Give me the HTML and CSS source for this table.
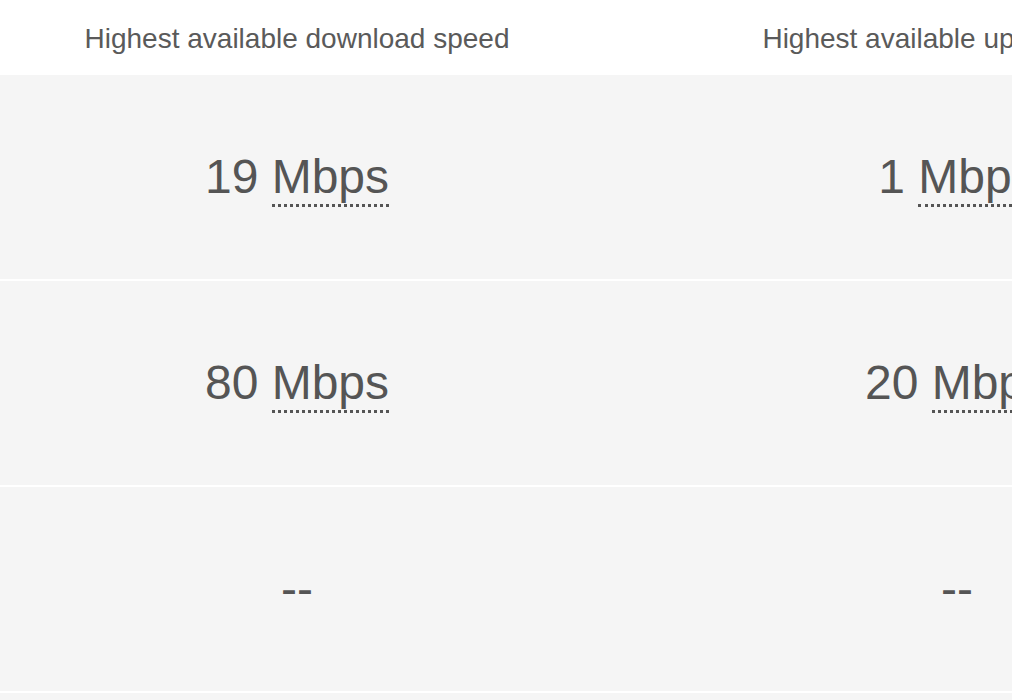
FILE: index.html
```html
<!DOCTYPE html>
<html lang="en">
<head>
<meta charset="utf-8">
<title>Speeds</title>
<link rel="stylesheet" href="styles.css">
</head>
<body>
<div class="table">
  <div class="row head">
    <div class="cell">Highest available download speed</div>
    <div class="cell">Highest available upload speed</div>
  </div>
  <div class="row">
    <div class="cell val">19 <abbr class="unit" title="Megabits per second">Mbps</abbr></div>
    <div class="cell val">1 <abbr class="unit" title="Megabits per second">Mbps</abbr></div>
  </div>
  <div class="row">
    <div class="cell val">80 <abbr class="unit" title="Megabits per second">Mbps</abbr></div>
    <div class="cell val">20 <abbr class="unit" title="Megabits per second">Mbps</abbr></div>
  </div>
  <div class="row">
    <div class="cell val">--</div>
    <div class="cell val">--</div>
  </div>
  <div class="row">
    <div class="cell val"></div>
    <div class="cell val"></div>
  </div>
</div>
</body>
</html>
```
FILE: styles.css
```css
html, body {
  margin: 0;
  padding: 0;
  background: #ffffff;
  overflow: hidden;
  width: 1012px;
  height: 700px;
}
body {
  font-family: "Liberation Sans", Arial, sans-serif;
  color: #555555;
}
.table {
  display: flex;
  flex-direction: column;
  width: 1320px;
}
.row {
  display: grid;
  grid-template-columns: 594px 726px;
  height: 204px;
  background: #f5f5f5;
  border-bottom: 2px solid #ffffff;
}
.row.head {
  height: 75px;
  background: #ffffff;
  border-bottom: 0;
}
.cell {
  text-align: center;
  white-space: nowrap;
}
.head .cell {
  font-size: 28px;
  line-height: 73px;
  padding-top: 2px;
  color: #5a5a5a;
}
.val {
  font-size: 48px;
  line-height: 204px;
  color: #555555;
}
.unit {
  text-decoration: none;
  border-bottom: 3px dotted #555555;
  padding-bottom: 1px;
}
```
